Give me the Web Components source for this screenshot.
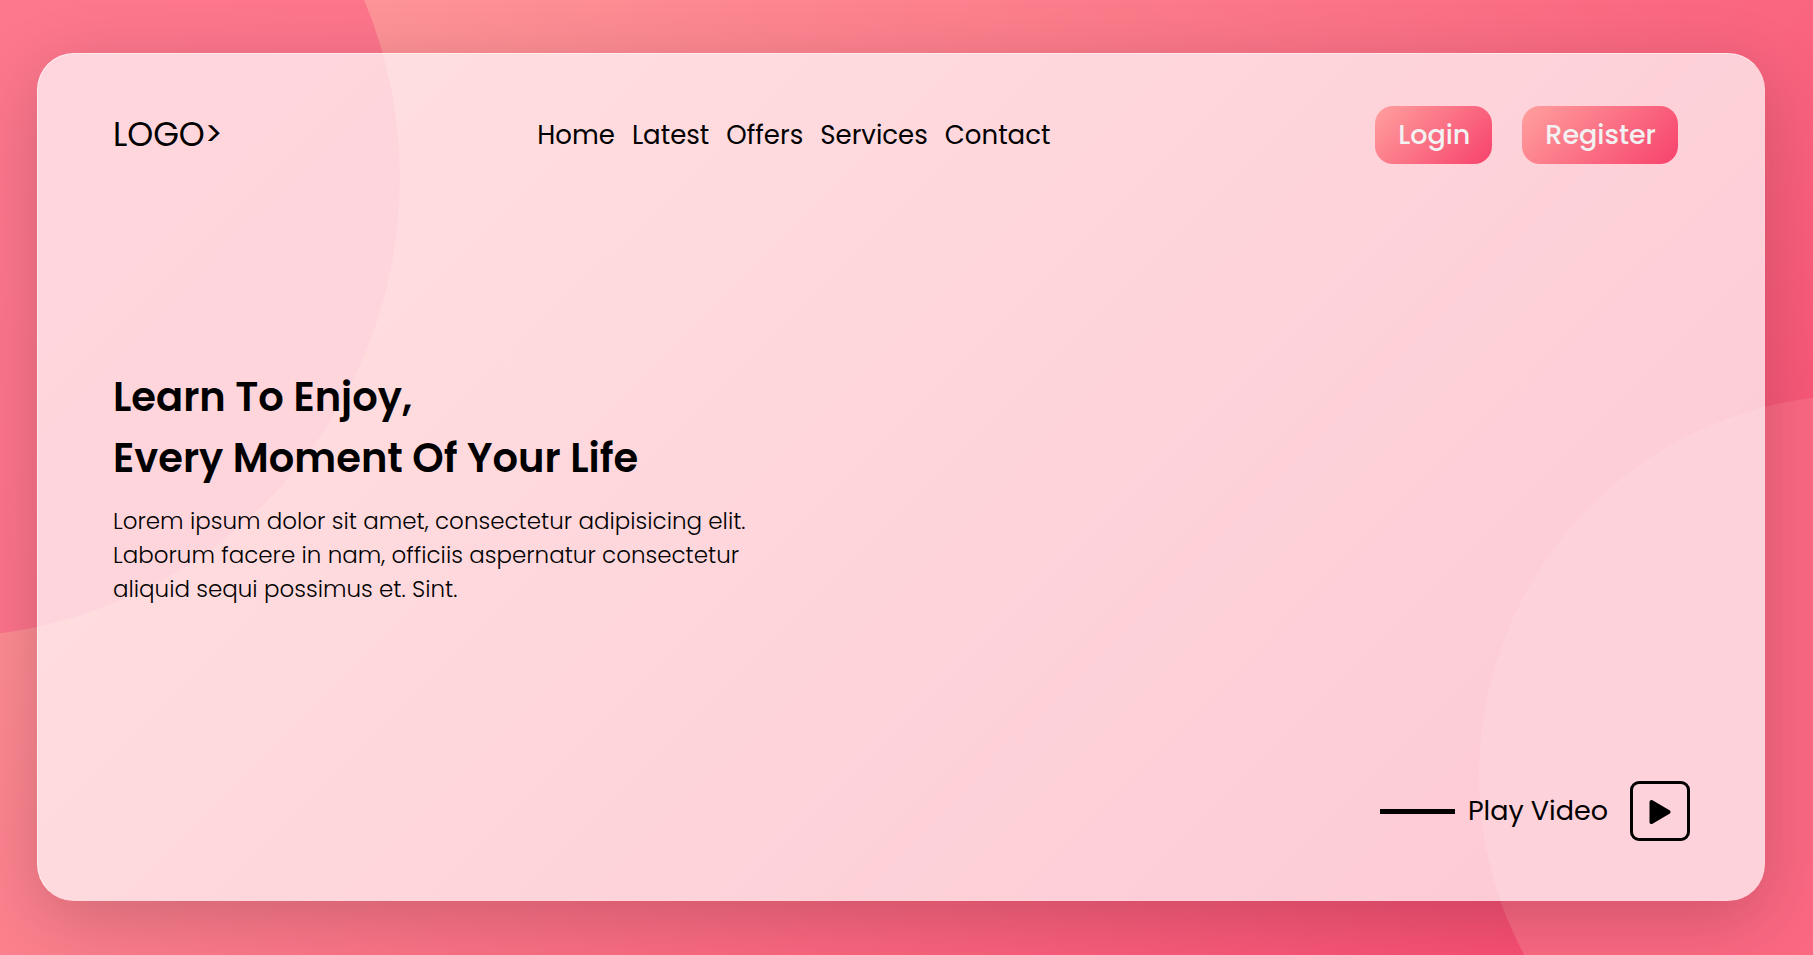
<!DOCTYPE html>
<html lang="en">
<head>
<meta charset="utf-8">
<meta name="viewport" content="width=device-width, initial-scale=1">
<title>Learn To Enjoy</title>
<style>
  html, body { margin: 0; min-height: 100%; }
  body { font-family: Poppins, Inter, sans-serif; color: #000; }
</style>
</head>
<body>
<landing-page>
  <glass-card>
    <site-header slot="header">
      <site-logo></site-logo>
      <site-nav></site-nav>
      <pill-button>Login</pill-button>
      <pill-button>Register</pill-button>
    </site-header>
    <hero-text>
      <span slot="title">Learn To Enjoy,<br>Every Moment Of Your Life</span>
      Lorem ipsum dolor sit amet, consectetur adipisicing elit.<br>
      Laborum facere in nam, officiis aspernatur consectetur<br>
      aliquid sequi possimus et. Sint.
    </hero-text>
    <play-video slot="footer">Play Video</play-video>
  </glass-card>
</landing-page>
<script>
const define = (name, html) => {
  const template = document.createElement('template');
  template.innerHTML = html;
  customElements.define(name, class extends HTMLElement {
    constructor() {
      super();
      this.attachShadow({ mode: 'open' }).append(template.content.cloneNode(true));
    }
  });
};

define('landing-page', `
  <style>
    :host {
      display: flex; position: relative; overflow: hidden; box-sizing: border-box;
      min-height: 100vh; padding: 53px 48px 54px 37px;
      background: linear-gradient(135deg, #ffa09e, #f7456e);
    }
    .circle { position: absolute; border-radius: 50%; }
    .one { left: -518px; top: -281px; width: 918px; height: 918px;
      background: linear-gradient(135deg, #ff7e8f, #fc7089); }
    .two { right: -426px; top: 395px; width: 760px; height: 760px;
      background: #fb6882; }
    ::slotted(*) { flex: 1; }
  </style>
  <div class="circle one"></div>
  <div class="circle two"></div>
  <slot></slot>`);

define('glass-card', `
  <style>
    :host {
      display: flex; flex-direction: column; position: relative; box-sizing: border-box;
      border-radius: 37px; padding: 52px 74px 59px 75px;
      border: 1px solid transparent;
      border-top-color: rgba(255,255,255,.5); border-left-color: rgba(255,255,255,.5);
      background: rgba(255,255,255,.7);
      box-shadow: 0 18px 70px rgba(0,0,0,.18);
    }
    main { flex: 1; display: flex; align-items: center; padding-top: 28px; }
  </style>
  <slot name="header"></slot>
  <main><slot></slot></main>
  <slot name="footer"></slot>`);

define('site-header', `
  <style>
    :host { display: block; }
    header { display: flex; align-items: center; padding-right: 12px; gap: 30px; }
    ::slotted(site-nav) { margin: 0 auto; padding-right: 10px; }
  </style>
  <header><slot></slot></header>`);

define('site-logo', `
  <style>
    :host { display: block; }
    a { display: block; color: inherit; text-decoration: none; font-size: 33px; line-height: 48px; }
  </style>
  <a href="#">LOGO&gt;</a>`);

define('site-nav', `
  <style>
    :host { display: block; }
    ul { display: flex; flex-wrap: wrap; gap: 17px; list-style: none; margin: 0; padding: 0; }
    a { display: block; color: inherit; text-decoration: none; font-size: 26px; line-height: 40px; }
  </style>
  <nav><ul>
    <li><a href="#">Home</a></li>
    <li><a href="#">Latest</a></li>
    <li><a href="#">Offers</a></li>
    <li><a href="#">Services</a></li>
    <li><a href="#">Contact</a></li>
  </ul></nav>`);

define('pill-button', `
  <style>
    :host { display: block; }
    button {
      display: block; border: 0; border-radius: 18px; padding: 9px 22px 9px 23px; cursor: pointer;
      font: 500 27px/40px Poppins, Inter, sans-serif; color: #f2f2f2;
      background: linear-gradient(135deg, #ffa09e, #f7426c);
    }
  </style>
  <button type="button"><slot></slot></button>`);

define('hero-text', `
  <style>
    :host { display: block; }
    h1 { margin: 0 0 15px; font-size: 40px; font-weight: 600; line-height: 61px; }
    p { margin: 0; font-size: 23px; font-weight: 300; line-height: 34px; }
  </style>
  <h1><slot name="title"></slot></h1>
  <p><slot></slot></p>`);

define('play-video', `
  <style>
    :host { display: flex; justify-content: flex-end; }
    label { display: flex; align-items: center; font-size: 27px; line-height: 40px; cursor: pointer; }
    .line { width: 75px; height: 5px; margin-right: 13px; background: #000; }
    button {
      display: grid; place-items: center; width: 60px; height: 60px; box-sizing: border-box;
      margin-left: 22px; padding: 0; border: 3px solid #000; border-radius: 9px;
      background: none; cursor: pointer;
    }
    svg { display: block; }
  </style>
  <label>
    <span class="line"></span><slot></slot>
    <button type="button" aria-label="Play Video">
      <svg width="24" height="26" viewBox="0 0 24 26" aria-hidden="true">
        <path d="M3.5 4 L20.5 14 L3.5 24 Z" stroke="#000" stroke-width="4" stroke-linejoin="round"/>
      </svg>
    </button>
  </label>`);
</script>
</body>
</html>
